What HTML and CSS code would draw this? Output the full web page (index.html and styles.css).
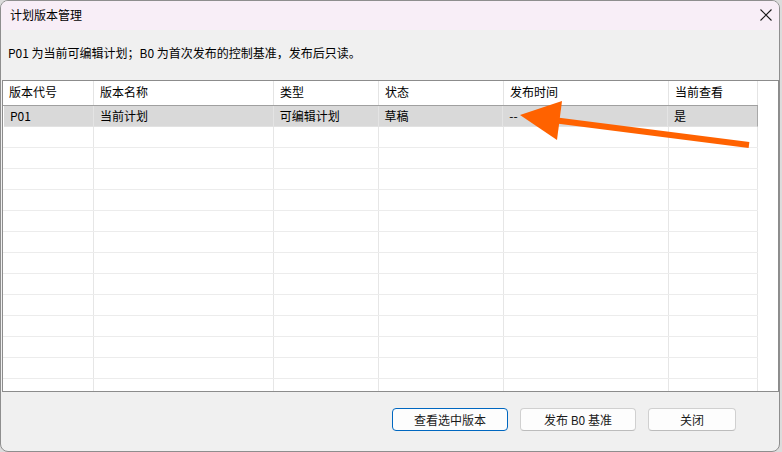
FILE: index.html
```html
<!DOCTYPE html>
<html lang="zh">
<head>
<meta charset="utf-8">
<title>计划版本管理</title>
<link rel="stylesheet" href="styles.css">
</head>
<body>
<div class="window">
  <div class="titlebar">
    <span class="title">计划版本管理</span>
    <span class="close">
      <svg width="12" height="12" viewBox="0 0 12 12"><path d="M0.5 0.5 L11.5 11.5 M11.5 0.5 L0.5 11.5" stroke="#1a1a1a" stroke-width="1.1" fill="none"/></svg>
    </span>
  </div>
  <div class="info">P01 为当前可编辑计划；B0 为首次发布的控制基准，发布后只读。</div>
  <div class="table">
    <div class="row head">
      <div class="cell c1">版本代号</div>
      <div class="cell c2">版本名称</div>
      <div class="cell c3">类型</div>
      <div class="cell c4">状态</div>
      <div class="cell c5">发布时间</div>
      <div class="cell c6">当前查看</div>
    </div>
    <div class="row sel">
      <div class="cell c1">P01</div>
      <div class="cell c2">当前计划</div>
      <div class="cell c3">可编辑计划</div>
      <div class="cell c4">草稿</div>
      <div class="cell c5">--</div>
      <div class="cell c6">是</div>
    </div>
    <div class="row"><div class="cell c1"></div><div class="cell c2"></div><div class="cell c3"></div><div class="cell c4"></div><div class="cell c5"></div><div class="cell c6"></div></div>
    <div class="row"><div class="cell c1"></div><div class="cell c2"></div><div class="cell c3"></div><div class="cell c4"></div><div class="cell c5"></div><div class="cell c6"></div></div>
    <div class="row"><div class="cell c1"></div><div class="cell c2"></div><div class="cell c3"></div><div class="cell c4"></div><div class="cell c5"></div><div class="cell c6"></div></div>
    <div class="row"><div class="cell c1"></div><div class="cell c2"></div><div class="cell c3"></div><div class="cell c4"></div><div class="cell c5"></div><div class="cell c6"></div></div>
    <div class="row"><div class="cell c1"></div><div class="cell c2"></div><div class="cell c3"></div><div class="cell c4"></div><div class="cell c5"></div><div class="cell c6"></div></div>
    <div class="row"><div class="cell c1"></div><div class="cell c2"></div><div class="cell c3"></div><div class="cell c4"></div><div class="cell c5"></div><div class="cell c6"></div></div>
    <div class="row"><div class="cell c1"></div><div class="cell c2"></div><div class="cell c3"></div><div class="cell c4"></div><div class="cell c5"></div><div class="cell c6"></div></div>
    <div class="row"><div class="cell c1"></div><div class="cell c2"></div><div class="cell c3"></div><div class="cell c4"></div><div class="cell c5"></div><div class="cell c6"></div></div>
    <div class="row"><div class="cell c1"></div><div class="cell c2"></div><div class="cell c3"></div><div class="cell c4"></div><div class="cell c5"></div><div class="cell c6"></div></div>
    <div class="row"><div class="cell c1"></div><div class="cell c2"></div><div class="cell c3"></div><div class="cell c4"></div><div class="cell c5"></div><div class="cell c6"></div></div>
    <div class="row"><div class="cell c1"></div><div class="cell c2"></div><div class="cell c3"></div><div class="cell c4"></div><div class="cell c5"></div><div class="cell c6"></div></div>
    <div class="row"><div class="cell c1"></div><div class="cell c2"></div><div class="cell c3"></div><div class="cell c4"></div><div class="cell c5"></div><div class="cell c6"></div></div>
    <div class="row"><div class="cell c1"></div><div class="cell c2"></div><div class="cell c3"></div><div class="cell c4"></div><div class="cell c5"></div><div class="cell c6"></div></div>
  </div>
  <div class="buttons">
    <button class="btn primary w116">查看选中版本</button>
    <button class="btn w116">发布 B0 基准</button>
    <button class="btn w87">关闭</button>
  </div>
  <svg class="arrow" width="782" height="452" viewBox="0 0 782 452">
    <line x1="553" y1="120" x2="749" y2="145" stroke="#ff6200" stroke-width="6"/>
    <polygon points="520,115 562,101 557,140" fill="#ff6200"/>
  </svg>
</div>
</body>
</html>
```
FILE: styles.css
```css
html, body {
  margin: 0;
  padding: 0;
}
body {
  width: 782px;
  height: 452px;
  background: #dcdcdc;
  font-family: "Noto Sans CJK SC", "Noto Sans", sans-serif;
  font-size: 12px;
  color: #000;
  overflow: hidden;
}
.window {
  position: relative;
  box-sizing: border-box;
  width: 780px;
  height: 452px;
  border: 1px solid #8e8e8e;
  border-radius: 8px;
  background: #f0f0f0;
  overflow: hidden;
  display: flex;
  flex-direction: column;
}
.titlebar {
  height: 29px;
  background: #f8eef7;
  display: flex;
  align-items: center;
  justify-content: space-between;
  padding: 0 1px 0 9px;
}
.title {
  line-height: 16px;
  margin-top: -1px;
}
.close {
  display: flex;
  width: 24px;
  justify-content: center;
  margin-top: -1px;
}
.info {
  height: 50px;
  padding-left: 7px;
  line-height: 16px;
  padding-top: 15px;
  box-sizing: border-box;
}
.table {
  margin-left: 1px;
  width: 777px;
  height: 312px;
  box-sizing: border-box;
  border: 1px solid #8c8c8c;
  background: #fff;
  overflow: hidden;
}
.row {
  display: flex;
  height: 21px;
  box-sizing: border-box;
  border-bottom: 1px solid #ececec;
  width: 755px;
}
.row.head {
  height: 25px;
  border-bottom: 1px solid #a0a0a0;
}
.row.sel {
  background: #d9d9d9;
  border-bottom: 1px solid #e2e2e2;
  border-right: 1px solid #a8a8a8;
  margin-left: 1px;
  width: 754px;
}
.cell {
  box-sizing: border-box;
  border-right: 1px solid #e6e6e6;
  padding-left: 6px;
  line-height: 20px;
  white-space: nowrap;
}
.row.head .cell {
  line-height: 22px;
  border-right-color: #e4e4e4;
}
.row.sel .cell {
  border-right-color: #e4e4e4;
}
.row.sel .c6 {
  border-right: none;
}
.c1 { width: 91px; }
.c2 { width: 180px; }
.c3 { width: 105px; }
.c4 { width: 125px; }
.c5 { width: 165px; }
.c6 { width: 89px; }
.row.sel .c1 { width: 90px; }
.buttons {
  display: flex;
  justify-content: flex-end;
  gap: 12px;
  padding-right: 43px;
  padding-top: 16px;
}
.btn {
  font-family: "Noto Sans CJK SC", "Noto Sans", sans-serif;
  font-size: 12px;
  height: 23px;
  box-sizing: border-box;
  border: 1px solid #d0d0d0;
  border-bottom-color: #bcbcbc;
  border-radius: 4px;
  background: #fdfdfd;
  color: #1a1a1a;
  padding: 0;
  line-height: 20px;
}
.btn.primary {
  border: 1px solid #0067c0;
}
.w116 { width: 116px; }
.w87 { width: 88px; }
.arrow {
  position: absolute;
  left: -1px;
  top: -1px;
  pointer-events: none;
}
```
